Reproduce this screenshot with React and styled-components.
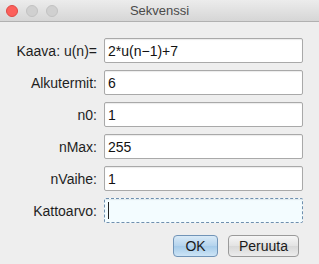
import React from "react";
import styled, { createGlobalStyle } from "styled-components";

const Global = createGlobalStyle`
  html, body {
    margin: 0;
    padding: 0;
    background: #ececec;
  }
`;

const Window = styled.div`
  width: 319px;
  height: 264px;
  background: #eeeeee;
  font-family: "Liberation Sans", Arial, sans-serif;
  display: flex;
  flex-direction: column;
  overflow: hidden;
`;

const TitleBar = styled.div`
  height: 22px;
  box-sizing: border-box;
  background: linear-gradient(#ececec, #d6d6d6);
  border-bottom: 1px solid #b1b1b1;
  display: flex;
  align-items: center;
  position: relative;
  padding-left: 6px;
`;

const Lights = styled.div`
  display: flex;
  gap: 8px;
`;

const Light = styled.span`
  width: 12px;
  height: 12px;
  border-radius: 50%;
  box-sizing: border-box;
  background: ${({ $active }) => ($active ? "#fc605b" : "#d0d0d0")};
  border: 1px solid ${({ $active }) => ($active ? "#de4a45" : "#c2c2c2")};
`;

const Title = styled.div`
  position: absolute;
  left: 0;
  right: 0;
  text-align: center;
  font-size: 13px;
  color: #4a4a4a;
  font-family: "Liberation Sans", Arial, sans-serif;
`;

const Form = styled.div`
  display: grid;
  grid-template-columns: 85px 199px;
  column-gap: 7px;
  row-gap: 7px;
  padding: 16px 0 0 12px;
  align-items: center;
`;

const Label = styled.label`
  font-size: 14px;
  color: #1e1e1e;
  text-align: right;
  white-space: nowrap;
`;

const Field = styled.div`
  height: 25px;
  box-sizing: border-box;
  border: 1px solid ${({ $focus }) => ($focus ? "#6f8fae" : "#a9a9a9")};
  border-style: ${({ $focus }) => ($focus ? "dashed" : "solid")};
  border-radius: 2px;
  background: ${({ $focus }) => ($focus ? "#f3fcff" : "#ffffff")};
  box-shadow: inset 0 1px 1px rgba(0, 0, 0, 0.08);
  font-size: 14px;
  color: #111;
  display: flex;
  align-items: center;
  padding-left: 3px;
`;

const Caret = styled.span`
  width: 1px;
  height: 17px;
  background: #222;
`;

const Buttons = styled.div`
  display: flex;
  justify-content: flex-end;
  gap: 10px;
  padding: 12px 20px 0 0;
`;

const Button = styled.button`
  height: 22px;
  width: ${({ $w }) => $w}px;
  box-sizing: border-box;
  border-radius: 4px;
  border: 1px solid ${({ $primary }) => ($primary ? "#7194b7" : "#9a9a9a")};
  background: ${({ $primary }) =>
    $primary
      ? "linear-gradient(#d9eaf7, #b4d3ed 50%, #a5cbe9 51%, #cde4f6)"
      : "linear-gradient(#f6f6f6, #e3e3e3 50%, #d8d8d8 51%, #ececec)"};
  font-family: "Liberation Sans", Arial, sans-serif;
  font-size: 14px;
  color: #1a1a1a;
  padding: 0;
  display: flex;
  align-items: center;
  justify-content: center;
`;

const rows = [
  { label: "Kaava: u(n)=", value: "2*u(n\u22121)+7" },
  { label: "Alkutermit:", value: "6" },
  { label: "n0:", value: "1" },
  { label: "nMax:", value: "255" },
  { label: "nVaihe:", value: "1" },
];

const App = () => {
  return (
    <Window>
      <Global />
      <TitleBar>
        <Lights>
          <Light $active />
          <Light />
          <Light />
        </Lights>
        <Title>Sekvenssi</Title>
      </TitleBar>
      <Form>
        {rows.map((row) => (
          <React.Fragment key={row.label}>
            <Label>{row.label}</Label>
            <Field>{row.value}</Field>
          </React.Fragment>
        ))}
        <Label>Kattoarvo:</Label>
        <Field $focus>
          <Caret />
        </Field>
      </Form>
      <Buttons>
        <Button $primary $w={45}>OK</Button>
        <Button $w={71}>Peruuta</Button>
      </Buttons>
    </Window>
  );
};

export default App;
